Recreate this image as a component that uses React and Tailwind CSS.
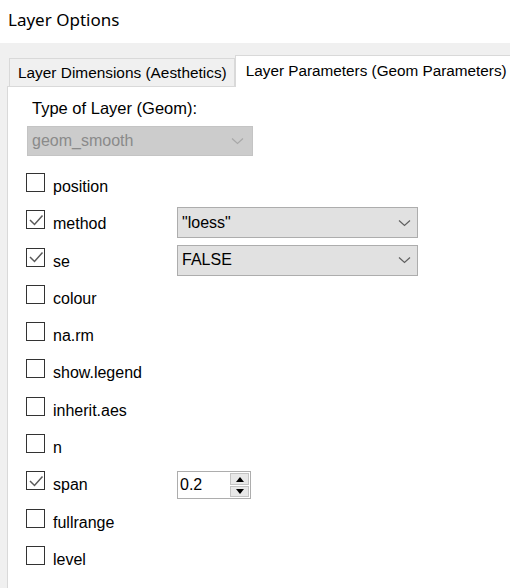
import React from 'react';

const font = { fontFamily: '"Liberation Sans", Arial, sans-serif' };

const params = [
    { name: 'position', checked: false },
    { name: 'method', checked: true, control: 'select', value: '"loess"' },
    { name: 'se', checked: true, control: 'select', value: 'FALSE' },
    { name: 'colour', checked: false },
    { name: 'na.rm', checked: false },
    { name: 'show.legend', checked: false },
    { name: 'inherit.aes', checked: false },
    { name: 'n', checked: false },
    { name: 'span', checked: true, control: 'spin', value: '0.2' },
    { name: 'fullrange', checked: false },
    { name: 'level', checked: false },
];

const Chevron = ({ color }) => (
    <svg width="13" height="8" viewBox="0 0 13 8" className="shrink-0">
        <path d="M1 1.5 L6.5 6.5 L12 1.5" fill="none" stroke={color} strokeWidth="1.2" />
    </svg>
);

const Checkbox = ({ checked }) => (
    <div className="w-[19px] h-[19px] shrink-0 border-[1.5px] border-[#333333] bg-white flex items-center justify-center">
        {checked && (
            <svg width="16" height="16" viewBox="0 0 16 16">
                <path d="M2 8 L6.5 12.5 L14.5 3.5" fill="none" stroke="#5a5a5a" strokeWidth="1.5" />
            </svg>
        )}
    </div>
);

const Select = ({ value }) => (
    <div className="-mt-[3px] w-[241px] h-[31px] bg-[#e1e1e1] border border-[#adadad] flex items-center justify-between pl-[4px] pr-[6px] text-[16px] text-black">
        <span>{value}</span>
        <Chevron color="#606060" />
    </div>
);

const Spinner = ({ value }) => (
    <div className="w-[74px] h-[28px] border border-[#adadad] bg-white flex">
        <div className="flex-1 pl-[2px] leading-[26px] text-[16px] text-black">{value}</div>
        <div className="w-[21px] flex flex-col p-[1px] gap-[1px]">
            <div className="flex-1 bg-[#e8e8e8] border border-[#c4c4c4] flex items-center justify-center">
                <svg width="8" height="5" viewBox="0 0 8 5"><path d="M0 5 L4 0 L8 5 Z" fill="#000" /></svg>
            </div>
            <div className="flex-1 bg-[#e8e8e8] border border-[#c4c4c4] flex items-center justify-center">
                <svg width="8" height="5" viewBox="0 0 8 5"><path d="M0 0 L4 5 L8 0 Z" fill="#000" /></svg>
            </div>
        </div>
    </div>
);

export default function App() {
    return (
        <div className="w-[510px] h-[588px] overflow-hidden flex flex-col bg-[#f0f0f0]" style={font}>
            <div className="h-[43px] bg-white pl-[8px] pt-[8px] shrink-0">
                <div className="text-[17px] leading-[24px] text-black" style={{ fontFamily: '"Noto Sans", "Open Sans", sans-serif' }}>
                    Layer Options
                </div>
            </div>

            {/* Tabs */}
            <div className="h-[43px] shrink-0 flex items-end pl-[7px] whitespace-nowrap">
                <div className="ml-[2px] h-[28px] pl-[8px] pr-[7px] border border-b-0 border-[#d9d9d9] bg-[#f0f0f0] text-[15.4px] leading-[28px] text-black">
                    Layer Dimensions (Aesthetics)
                </div>
                <div className="relative h-[32px] -mb-px pl-[10px] border-l border-t border-[#d9d9d9] bg-white text-[15.3px] leading-[30px] text-black flex-1">
                    Layer Parameters (Geom Parameters)
                </div>
            </div>

            {/* Panel */}
            <div className="flex-1 ml-[7px] border-l border-t border-[#d9d9d9] bg-white pl-[19px] pt-[11px]">
                <div className="ml-[5px] text-[16.5px] leading-[20px] text-black">Type of Layer (Geom):</div>
                <div className="mt-[8px] w-[226px] h-[30px] bg-[#cccccc] border border-[#c4c4c4] flex items-center justify-between pl-[4px] pr-[8px]">
                    <span className="text-[16px] text-[#8a8a8a]">geom_smooth</span>
                    <Chevron color="#a8a8a8" />
                </div>

                <div className="mt-[17px] -ml-px">
                    {params.map((p) => (
                        <div key={p.name} className="h-[37.3px] flex items-start">
                            <Checkbox checked={p.checked} />
                            <div className="w-[124px] ml-[8px] mt-[4px] text-[16px] leading-[20px] text-black">{p.name}</div>
                            {p.control === 'select' && <Select value={p.value} />}
                            {p.control === 'spin' && <Spinner value={p.value} />}
                        </div>
                    ))}
                </div>
            </div>
        </div>
    );
}
